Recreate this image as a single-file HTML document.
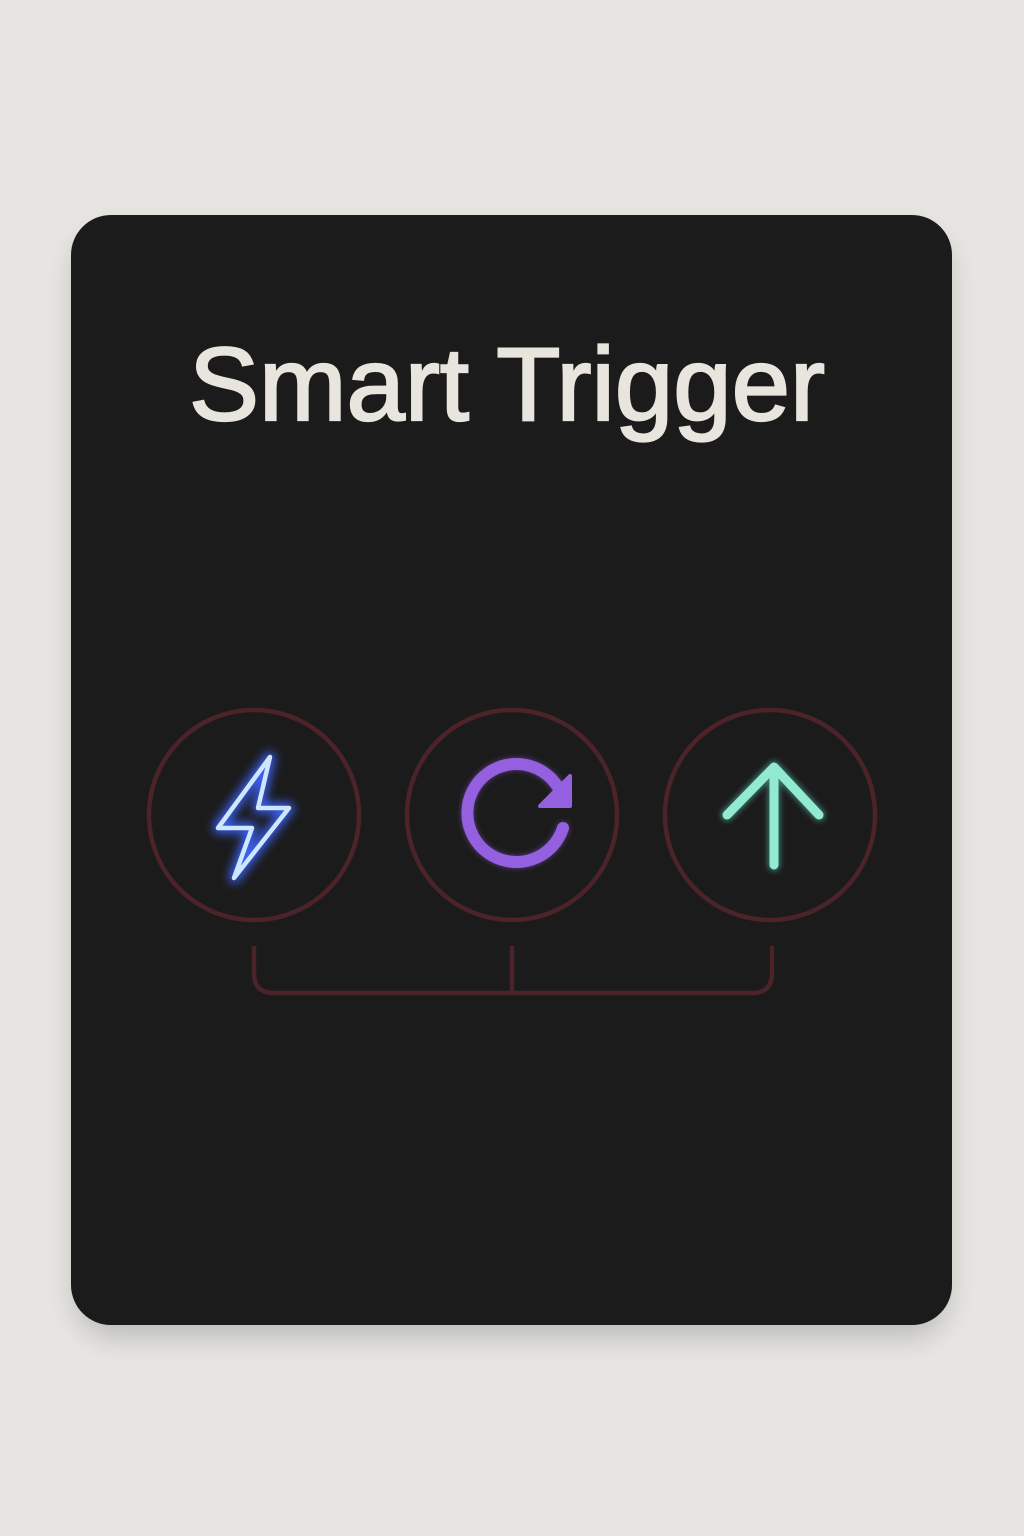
<!DOCTYPE html>
<html><head><meta charset="utf-8"><style>
html,body{margin:0;padding:0;width:1024px;height:1536px;background:#e6e5e1;overflow:hidden}
svg{position:absolute;left:0;top:0}
</style></head><body>
<svg width="1024" height="1536" viewBox="0 0 1024 1536" xmlns="http://www.w3.org/2000/svg">
<defs>
<filter id="sh" x="-20%" y="-20%" width="140%" height="140%"><feGaussianBlur stdDeviation="14"/></filter>
<filter id="gb" x="-50%" y="-50%" width="200%" height="200%"><feGaussianBlur stdDeviation="5"/></filter>
<filter id="gs" x="-50%" y="-50%" width="200%" height="200%"><feGaussianBlur stdDeviation="3"/></filter>
</defs>
<rect x="75" y="232" width="873" height="1105" rx="40" fill="#000" opacity="0.18" filter="url(#sh)"/>
<rect x="71" y="215" width="881" height="1110" rx="40" fill="#1b1b1b"/>
<text x="507" y="420" text-anchor="middle" font-family="Liberation Sans, sans-serif" font-size="104" fill="#e8e5df" stroke="#e8e5df" stroke-width="2.2" textLength="636" lengthAdjust="spacingAndGlyphs">Smart Trigger</text>
<g fill="none" stroke="#4b2329" stroke-width="4.5">
<circle cx="254" cy="815" r="105"/>
<circle cx="512" cy="815" r="105"/>
<circle cx="770" cy="815" r="105"/>
<path d="M254 946 V973 Q254 993 274 993 H752 Q772 993 772 973 V946 M512 946 V993"/>
</g>
<path d="M270 757 L218 828 L252 828 L234 878 L289 808 L258 808 Z" fill="none" stroke="#3d63ff" stroke-width="10" stroke-linejoin="round" filter="url(#gb)"/>
<path d="M270 757 L218 828 L252 828 L234 878 L289 808 L258 808 Z" fill="none" stroke="#cfe6ff" stroke-width="4.5" stroke-linejoin="round"/>
<path d="M563 798 A49 49 0 1 0 563 828" fill="none" stroke="#9b62e6" stroke-width="12" stroke-linecap="round" opacity="0.5" filter="url(#gs)"/>
<path d="M563 798 A49 49 0 1 0 563 828" fill="none" stroke="#9460e0" stroke-width="12" stroke-linecap="round"/>
<path d="M570 776 L570 806 L540 806 Z" fill="#9460e0" stroke="#9460e0" stroke-width="4" stroke-linejoin="round"/>
<path d="M727 815 L774 767 L819 815 M774 770 V865" fill="none" stroke="#5fe0bf" stroke-width="12" stroke-linecap="round" stroke-linejoin="round" opacity="0.5" filter="url(#gs)"/>
<path d="M727 815 L774 767 L819 815 M774 770 V865" fill="none" stroke="#93ead3" stroke-width="9" stroke-linecap="round" stroke-linejoin="round"/>
</svg>
</body></html>
